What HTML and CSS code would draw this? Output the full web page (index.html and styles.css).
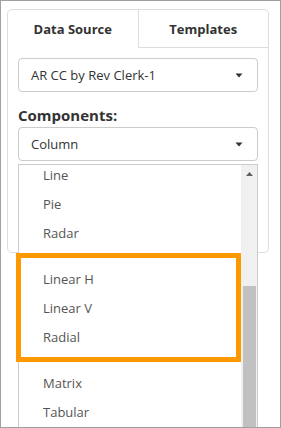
FILE: index.html
```html
<!DOCTYPE html>
<html lang="en">
<head>
    <meta charset="UTF-8">
    <title>Components</title>
    <link rel="stylesheet" href="styles.css">
</head>
<body>
    <div class="frame">
        <div class="panel">
            <div class="tabs">
                <div class="tab active">Data Source</div>
                <div class="tab">Templates</div>
            </div>
            <div class="panel-body">
                <div class="select">
                    <span>AR CC by Rev Clerk-1</span>
                    <svg class="caret" width="8" height="5" viewBox="0 0 8 5"><polygon points="0.5,0.5 7.5,0.5 4,4.5" fill="#333"/></svg>
                </div>
                <div class="label">Components:</div>
                <div class="select">
                    <span>Column</span>
                    <svg class="caret" width="8" height="5" viewBox="0 0 8 5"><polygon points="0.5,0.5 7.5,0.5 4,4.5" fill="#333"/></svg>
                </div>
            </div>
        </div>

        <div class="dropdown">
            <div class="options">
                <div class="option">Line</div>
                <div class="option">Pie</div>
                <div class="option">Radar</div>
                <div class="highlight">
                    <div class="option">Linear H</div>
                    <div class="option">Linear V</div>
                    <div class="option">Radial</div>
                </div>
                <div class="option">Matrix</div>
                <div class="option">Tabular</div>
            </div>
            <div class="scrollbar">
                <div class="sb-up">
                    <svg width="7" height="4" viewBox="0 0 7 4"><polygon points="0,4 7,4 3.5,0" fill="#606060"/></svg>
                </div>
                <div class="sb-thumb"></div>
            </div>
        </div>
    </div>
</body>
</html>
```

FILE: styles.css
```css
body {
    margin: 0;
    font-family: "Open Sans", "Noto Sans", sans-serif;
    background: #fff;
}
.frame {
    position: relative;
    width: 281px;
    height: 428px;
    box-sizing: border-box;
    border: 1px solid #a0a0a0;
    padding: 8px 10px 0 6px;
    overflow: hidden;
}
.panel {
    width: 262px;
    height: 244px;
    box-sizing: border-box;
    border: 1px solid #ddd;
    border-radius: 5px;
}
.tabs {
    display: flex;
}
.tab {
    flex: 1;
    height: 38px;
    box-sizing: border-box;
    display: flex;
    align-items: center;
    justify-content: center;
    font-size: 13px;
    font-weight: bold;
    color: #333;
    border-left: 1px solid #ddd;
    border-bottom: 1px solid #ddd;
}
.tab.active {
    border-left: none;
    border-bottom: none;
}
.panel-body {
    padding: 10px 10px 0 10px;
}
.select {
    height: 34px;
    box-sizing: border-box;
    border: 1px solid #ccc;
    border-radius: 4px;
    padding: 0 14px 0 12px;
    display: flex;
    align-items: center;
    justify-content: space-between;
    font-size: 13px;
    color: #333;
}
.label {
    margin: 13px 0 2px;
    line-height: 20px;
    font-size: 15px;
    font-weight: bold;
    color: #333;
}
.dropdown {
    position: absolute;
    left: 17px;
    top: 163px;
    width: 240px;
    height: 300px;
    box-sizing: border-box;
    border: 1px solid #ccc;
    background: #fff;
    display: flex;
}
.options {
    flex: 1;
    margin-top: -4px;
}
.option {
    height: 29px;
    line-height: 29px;
    padding-left: 24px;
    font-size: 13px;
    color: #555;
}
.highlight {
    margin: 5px 0 7px -3px;
    border: 5px solid #ff9900;
    padding: 7px 0 5px;
}
.highlight .option {
    padding-left: 22px;
}
.scrollbar {
    width: 16px;
    background: #f0f0f0;
}
.sb-up {
    height: 17px;
    display: flex;
    justify-content: center;
    align-items: center;
}
.sb-thumb {
    margin: 104px 1px 0 2px;
    height: 200px;
    background: #c1c1c1;
}
```
